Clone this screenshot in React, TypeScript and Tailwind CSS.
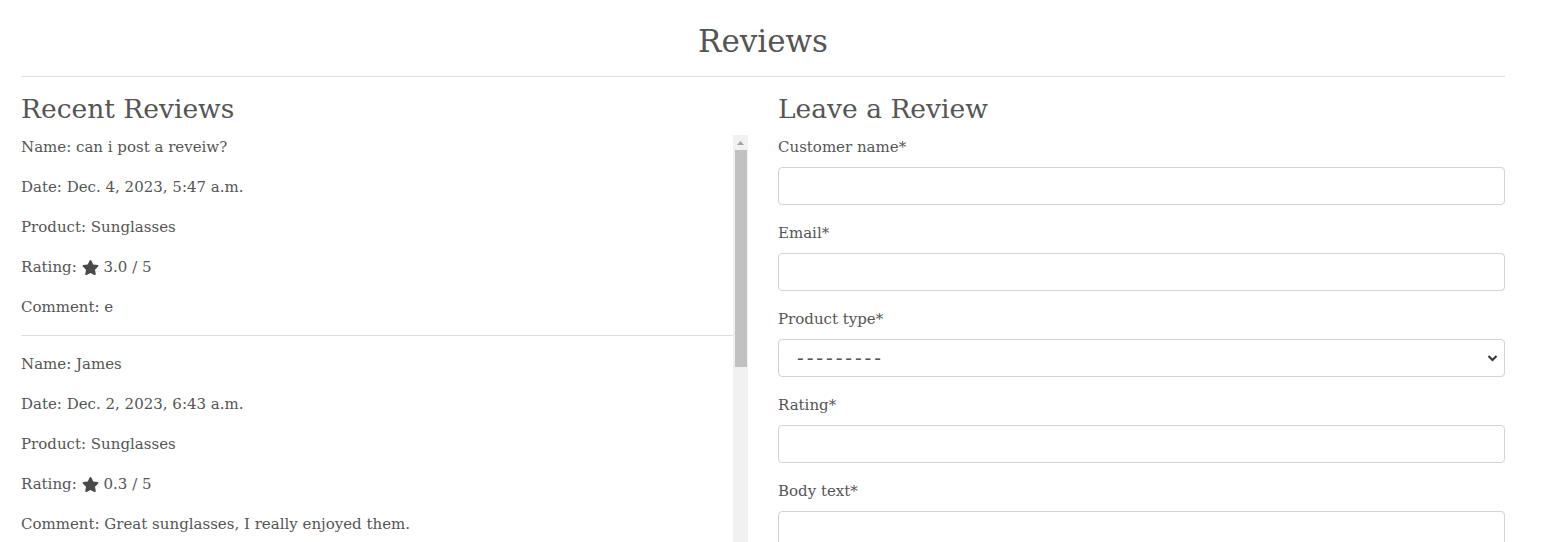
import React from "react";
import { FaStar } from "react-icons/fa";

const reviews = [
  { name: "can i post a reveiw?", date: "Dec. 4, 2023, 5:47 a.m.", product: "Sunglasses", rating: "3.0", comment: "e" },
  { name: "James", date: "Dec. 2, 2023, 6:43 a.m.", product: "Sunglasses", rating: "0.3", comment: "Great sunglasses, I really enjoyed them." },
  { name: "Sarah", date: "Nov. 28, 2023, 3:12 p.m.", product: "Hats", rating: "4.5", comment: "Lovely quality." },
  { name: "Tom", date: "Nov. 20, 2023, 9:05 a.m.", product: "Scarves", rating: "4.0", comment: "Very warm." },
  { name: "Anna", date: "Nov. 15, 2023, 1:30 p.m.", product: "Sunglasses", rating: "5.0", comment: "Perfect fit." },
];

function Field({ label, children }: { label: string; children: React.ReactNode }) {
  return (
    <div className="mb-4">
      <label className="block mb-2 leading-6">{label}</label>
      {children}
    </div>
  );
}

export default function App() {
  const font = { fontFamily: '"DejaVu Serif", "Liberation Serif", serif' };
  return (
    <div className="bg-white text-[#555] text-[15px] pl-[21px] pr-[36px]" style={font}>
      <h2 className="text-center text-[31px] leading-[38px] pt-[22px] mb-[16px]">Reviews</h2>
      <hr className="border-0 border-t border-[#dedede] mb-[15px]" />
      <div className="grid grid-cols-2 gap-[30px]">
        <div>
          <h3 className="text-[26.5px] leading-[34px] mb-[9px]">Recent Reviews</h3>
          <div className="flex h-[500px]">
            <div className="flex-1 overflow-hidden">
              {reviews.map((r, i) => (
                <div key={i} className="mb-4">
                  <p className="leading-6 mb-4">Name: {r.name}</p>
                  <p className="leading-6 mb-4">Date: {r.date}</p>
                  <p className="leading-6 mb-4">Product: {r.product}</p>
                  <p className="leading-6 mb-4 flex items-center">
                    Rating:&nbsp;<FaStar className="w-[17px] h-[17px] text-[#4a4a4a] mr-[5px]" />
                    {r.rating} / 5
                  </p>
                  <p className="leading-6 mb-4">Comment: {r.comment}</p>
                  <hr className="border-0 border-t border-[#dedede]" />
                </div>
              ))}
            </div>
            <div className="w-[15px] bg-[#f1f1f1] flex flex-col items-center">
              <div className="h-[15px] flex items-center justify-center">
                <svg width="7" height="4" viewBox="0 0 7 4">
                  <path d="M0 4 L3.5 0 L7 4 Z" fill="#a3a3a3" />
                </svg>
              </div>
              <div className="w-[12px] h-[217px] bg-[#c1c1c1]" />
            </div>
          </div>
        </div>
        <div>
          <h3 className="text-[26.5px] leading-[34px] mb-[9px]">Leave a Review</h3>
          <Field label="Customer name*">
            <input className="block w-full h-[38px] border border-[#ced4da] rounded-[4px] px-3" />
          </Field>
          <Field label="Email*">
            <input className="block w-full h-[38px] border border-[#ced4da] rounded-[4px] px-3" />
          </Field>
          <Field label="Product type*">
            <div className="relative">
              <select className="block w-full h-[38px] border border-[#ced4da] rounded-[4px] pl-[18px] appearance-none bg-white text-[#555] text-[20px] tracking-[2.9px]">
                <option>---------</option>
              </select>
              <svg className="pointer-events-none absolute right-[7px] top-[14px] w-[11px] h-[10px]" viewBox="0 0 11 10">
                <path d="M1.5 3 L5.5 7 L9.5 3" fill="none" stroke="#3a3a3a" strokeWidth="2.2" />
              </svg>
            </div>
          </Field>
          <Field label="Rating*">
            <input className="block w-full h-[38px] border border-[#ced4da] rounded-[4px] px-3" />
          </Field>
          <Field label="Body text*">
            <textarea className="block w-full h-[120px] border border-[#ced4da] rounded-[4px] px-3" />
          </Field>
        </div>
      </div>
    </div>
  );
}
